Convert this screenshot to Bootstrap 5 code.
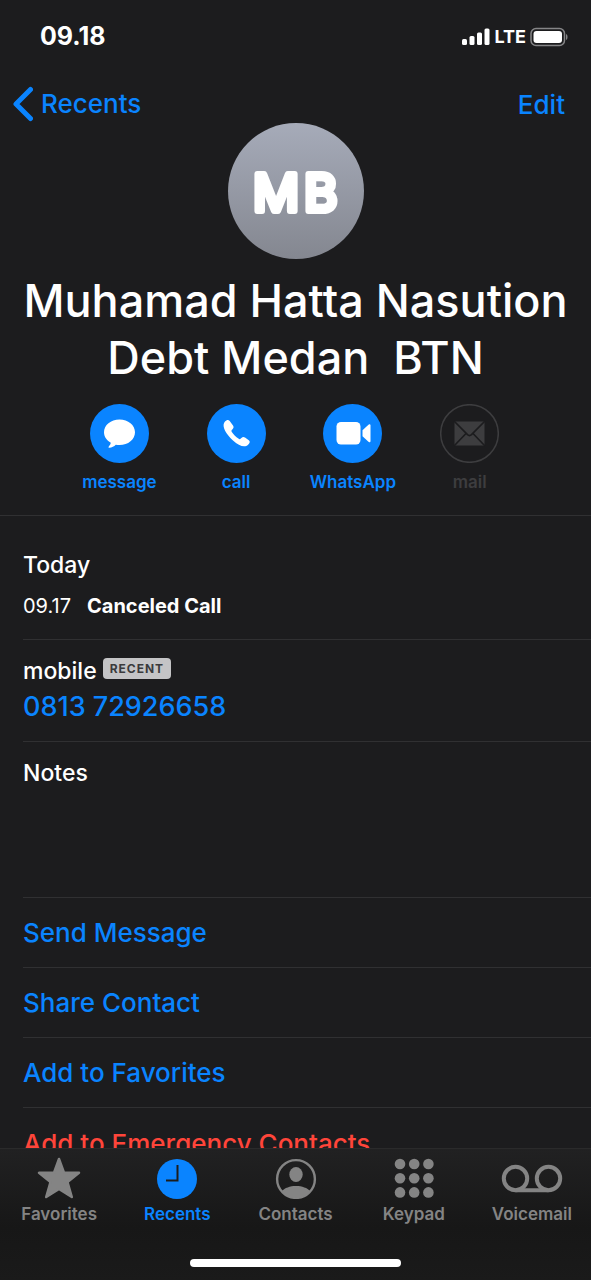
<!DOCTYPE html>
<html lang="en" data-bs-theme="dark">
<head>
<meta charset="utf-8">
<meta name="viewport" content="width=device-width, initial-scale=1">
<title>Contact</title>
<link href="https://cdn.jsdelivr.net/npm/bootstrap@5.3.0/dist/css/bootstrap.min.css" rel="stylesheet">
<style>
  :root { --ios-blue: #0a84ff; --ios-bg: #1c1c1e; --ios-line: #303032; --ios-grey: #848484; --ios-off: #3d3d3f; }
  body { background: var(--ios-bg); color: #fff; font-family: Inter, "Liberation Sans", sans-serif; }
  a { color: var(--ios-blue); text-decoration: none; }
  svg { display: block; flex: none; }
  .status-bar { height: 73px; padding: 0 22px 0 40px; font-size: 25px; font-weight: 700; }
  .status-net { font-size: 18px; font-weight: 700; }
  .top-bar { height: 50px; padding: 12px 26px 0 12px; font-size: 26px; line-height: 40px; font-weight: 500; }
  .plain-btn { background: none; border: 0; padding: 0; color: var(--ios-blue); font-weight: 500; }
  .contact-name { font-size: 45px; line-height: 57px; font-weight: 500; white-space: pre-wrap; margin: 13px 0 18px; }
  .quick-actions { padding: 0 63px 22px 61px; }
  .quick-btn { flex: 1 1 0; font-size: 17px; line-height: 22px; font-weight: 600; }
  .quick-btn:disabled { color: var(--ios-off); }
  .quick-btn svg { margin: 0 auto 8px; }
  .hairline { border-bottom: 1px solid var(--ios-line); }
  .details { padding-left: 23px; }
  .entry-label { font-size: 23px; line-height: 32px; font-weight: 500; }
  .call-log { padding: 33px 0 21px; }
  .call-row { font-size: 20px; line-height: 24px; margin-top: 13px; }
  .phone-entry { padding: 15px 0; }
  .recent-tag { background: #c4c4c6; color: #3a3a3c; font-size: 12px; line-height: 21px; font-weight: 700; border-radius: 4px; padding: 0 7px; margin: 3px 0 0 2px; letter-spacing: 1px; }
  .phone-number { font-size: 27px; line-height: 39px; font-weight: 500; }
  .notes-entry { height: 156px; padding-top: 15px; }
  .notes-input { background: none; border: 0; color: #fff; resize: none; outline: 0; }
  .action-row { height: 70px; font-size: 26px; font-weight: 500; }
  .danger-row { color: #ff453a; }
  .tab-bar { height: 132px; border-top: 1px solid #2a2a2b; background: linear-gradient(#212122, #171717 60%, #1a1a1a); }
  .tab-link { flex: 1 1 0; color: var(--ios-grey); font-size: 17px; line-height: 22px; font-weight: 600; padding-top: 8px; }
  .tab-link.active { color: var(--ios-blue); }
  .tab-link svg { margin: 0 auto 4px; }
  .home-bar { width: 211px; height: 8px; border-radius: 4px; background: #fff; margin: auto auto 13px; }
</style>
</head>
<body>
<div class="vh-100 d-flex flex-column overflow-hidden">
  <header class="flex-shrink-0">
    <div class="status-bar d-flex align-items-center justify-content-between">
      <span>09.18</span>
      <div class="d-flex align-items-center gap-1 status-net">
        <svg width="29" height="18" viewBox="0 0 29 18" fill="#fff" aria-hidden="true"><rect x="0" y="11" width="5" height="6" rx="1.5"/><rect x="7.5" y="8" width="5" height="9" rx="1.5"/><rect x="15" y="4.500" width="5" height="12.500" rx="1.500"/><rect x="22.500" y="0.500" width="5" height="16.500" rx="1.500"/></svg>
        <span>LTE</span>
        <svg width="39" height="20" viewBox="0 0 39 20" aria-hidden="true"><rect x="1" y="1.500" width="33.500" height="17" rx="5" fill="none" stroke="#858587" stroke-width="1.500"/><rect x="3.500" y="4" width="28.500" height="12" rx="3" fill="#fff"/><path d="M36 7c2 .6 2 5.400 0 6z" fill="#858587"/></svg>
      </div>
    </div>
    <nav class="top-bar d-flex justify-content-between" aria-label="Navigation">
      <a href="#" class="d-flex align-items-center gap-2"><svg width="21" height="36" viewBox="0 0 21 36" fill="none" stroke="#0a84ff" stroke-width="5" stroke-linecap="round" stroke-linejoin="round" aria-hidden="true"><path d="M18.500 3.500 4 18l14.500 14.500"/></svg><span>Recents</span></a>
      <button type="button" class="plain-btn">Edit</button>
    </nav>
  </header>
  <main class="flex-fill overflow-hidden">
    <section class="hairline text-center">
      <svg class="mx-auto" width="136" height="136" viewBox="0 0 136 136" role="img" aria-label="MB">
        <defs><linearGradient id="avatarShade" x2="0" y2="1"><stop stop-color="#a6abb9"/><stop offset="1" stop-color="#848790"/></linearGradient></defs>
        <circle cx="68" cy="68" r="68" fill="url(#avatarShade)"/>
        <text x="25 76" y="88" font-size="51" font-weight="400" fill="#fff" stroke="#fff" stroke-width="6" stroke-linejoin="round">MB</text>
      </svg>
      <h1 class="contact-name">Muhamad Hatta Nasution
Debt Medan  BTN</h1>
      <div class="quick-actions d-flex">
        <button type="button" class="plain-btn quick-btn"><svg width="59" height="59" viewBox="0 0 59 59" aria-hidden="true"><circle cx="29.500" cy="29.500" r="29.500" fill="#0a84ff"/><path d="M29.500 15.500c8.700 0 15.500 5.600 15.500 12.800s-6.800 12.800-15.500 12.800c-1.300 0-2.500-.1-3.700-.4-1.700 1.700-4 2.800-6.400 3-.9.100-1.200-.7-.6-1.300 1-1 1.800-2.200 2-3.600-4.100-2.300-6.800-6.100-6.800-10.500 0-7.200 6.800-12.800 15.500-12.800z" fill="#fff"/></svg>message</button>
        <button type="button" class="plain-btn quick-btn"><svg width="59" height="59" viewBox="0 0 59 59" aria-hidden="true"><circle cx="29.500" cy="29.500" r="29.500" fill="#0a84ff"/><path d="M18 17.500c1.600-1.800 3.500-2.100 4.700-.5l3.300 4.600c.9 1.300.7 2.500-.5 3.600-1.300 1.200-1.300 1.800-.5 3 1.700 2.500 3.900 4.700 6.400 6.400 1.200.8 1.800.8 3-.5 1.100-1.200 2.300-1.400 3.600-.5l3.800 2.700c1.600 1.200 1.100 2.900-.7 4.500-3.600 3.300-9.200.9-15.100-4.300-.9-.8-1.800-1.700-2.600-2.600-5.800-6.300-8.800-12.800-5.400-16.400z" fill="#fff"/></svg>call</button>
        <button type="button" class="plain-btn quick-btn"><svg width="59" height="59" viewBox="0 0 59 59" aria-hidden="true"><circle cx="29.500" cy="29.500" r="29.500" fill="#0a84ff"/><rect x="13.500" y="18" width="24" height="22.500" rx="4.500" fill="#fff"/><path d="M39.500 26.300l5.700-5.400c1-.9 2.300-.7 2.300.7v15.300c0 1.400-1.300 1.600-2.300.7l-5.700-5.400z" fill="#fff"/></svg>WhatsApp</button>
        <button type="button" class="plain-btn quick-btn" disabled><svg width="59" height="59" viewBox="0 0 59 59" aria-hidden="true"><circle cx="29.500" cy="29.500" r="28.800" fill="none" stroke="#3d3d3f" stroke-width="1.500"/><rect x="14.500" y="17.500" width="30" height="24" fill="#3d3d3f"/><path d="M14 17l13.500 13.700q2 1.800 4 0L45 17M14 42l12-12.500M45 42L33 29.500" fill="none" stroke="#1c1c1e" stroke-width="1.700"/></svg>mail</button>
      </div>
    </section>
    <section class="details">
      <div class="call-log hairline">
        <div class="entry-label">Today</div>
        <div class="call-row d-flex"><span class="me-3">09.17</span><strong>Canceled Call</strong></div>
      </div>
      <div class="phone-entry hairline">
        <div class="entry-label d-flex align-items-start gap-1"><span>mobile</span><span class="recent-tag">RECENT</span></div>
        <a href="#" class="phone-number d-block">0813 72926658</a>
      </div>
      <div class="notes-entry hairline d-flex flex-column">
        <label for="notes" class="entry-label">Notes</label>
        <textarea id="notes" class="notes-input flex-fill w-100 p-0"></textarea>
      </div>
      <a href="#" class="action-row hairline d-flex align-items-center">Send Message</a>
      <a href="#" class="action-row hairline d-flex align-items-center">Share Contact</a>
      <a href="#" class="action-row hairline d-flex align-items-center">Add to Favorites</a>
      <a href="#" class="action-row danger-row d-flex align-items-center">Add to Emergency Contacts</a>
    </section>
  </main>
  <footer class="tab-bar flex-shrink-0 d-flex flex-column">
    <nav class="d-flex text-center" aria-label="Tabs">
      <a href="#" class="tab-link"><svg width="44" height="42" viewBox="0 0 44 42" fill="#848484" stroke="#848484" stroke-width="2.500" stroke-linejoin="round" aria-hidden="true"><path d="M22 2l5 13.700h15L30.500 25l4.300 15L22 32 9.200 40l4.300-15L2 15.700h15z"/></svg>Favorites</a>
      <a href="#" class="tab-link active" aria-current="page"><svg width="44" height="42" viewBox="0 0 44 42" aria-hidden="true"><circle cx="22" cy="22" r="20" fill="#0a84ff"/><path d="M22.500 8v15.500H11" fill="none" stroke="#1c1c1c" stroke-width="2"/></svg>Recents</a>
      <a href="#" class="tab-link"><svg width="44" height="42" viewBox="0 0 44 42" aria-hidden="true"><defs><clipPath id="personRing"><circle cx="22" cy="22" r="19"/></clipPath></defs><circle cx="22" cy="22" r="18.900" fill="none" stroke="#848484" stroke-width="2.400"/><g fill="#848484" clip-path="url(#personRing)"><ellipse cx="22" cy="17.500" rx="6.700" ry="7.500"/><path d="M8 34c2.500-3 8-5 14-5s11.500 2 14 5v8H8z"/></g></svg>Contacts</a>
      <a href="#" class="tab-link"><svg width="44" height="42" viewBox="0 0 44 42" fill="#848484" aria-hidden="true"><circle cx="8" cy="7" r="5.300"/><circle cx="22.200" cy="7" r="5.300"/><circle cx="36.400" cy="7" r="5.300"/><circle cx="8" cy="21.200" r="5.300"/><circle cx="22.200" cy="21.200" r="5.300"/><circle cx="36.400" cy="21.200" r="5.300"/><circle cx="8" cy="35.400" r="5.300"/><circle cx="22.200" cy="35.400" r="5.300"/><circle cx="36.400" cy="35.400" r="5.300"/></svg>Keypad</a>
      <a href="#" class="tab-link"><svg width="62" height="42" viewBox="0 0 62 42" fill="none" stroke="#848484" stroke-width="4" aria-hidden="true"><circle cx="14.500" cy="21.500" r="11.700"/><circle cx="47.500" cy="21.500" r="11.700"/><path d="M14.500 33.200h33"/></svg>Voicemail</a>
    </nav>
    <div class="home-bar"></div>
  </footer>
</div>
<script src="https://cdn.jsdelivr.net/npm/bootstrap@5.3.0/dist/js/bootstrap.bundle.min.js"></script>
</body>
</html>
